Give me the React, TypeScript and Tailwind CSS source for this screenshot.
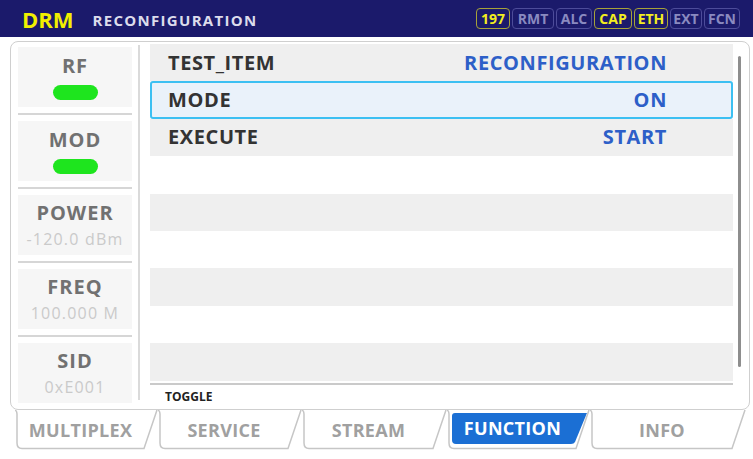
import React from 'react';

const indicators = [
  { label: '197', on: true, w: 'w-[34px]' },
  { label: 'RMT', on: false, w: 'w-[42px]' },
  { label: 'ALC', on: false, w: 'w-[36px]' },
  { label: 'CAP', on: true, w: 'w-[38px]' },
  { label: 'ETH', on: true, w: 'w-[34px]' },
  { label: 'EXT', on: false, w: 'w-[32px]' },
  { label: 'FCN', on: false, w: 'w-[36px]' },
];

const statusCells = [
  { label: 'RF', led: true },
  { label: 'MOD', led: true },
  { label: 'POWER', value: '-120.0 dBm' },
  { label: 'FREQ', value: '100.000 M' },
  { label: 'SID', value: '0xE001' },
];

const rows = [
  { name: 'TEST_ITEM', value: 'RECONFIGURATION' },
  { name: 'MODE', value: 'ON' },
  { name: 'EXECUTE', value: 'START' },
  {}, {}, {}, {}, {}, {},
];

const tabs = [
  { label: 'MULTIPLEX', w: 143 },
  { label: 'SERVICE', w: 144 },
  { label: 'STREAM', w: 145 },
  { label: 'FUNCTION', w: 143, active: true },
  { label: 'INFO', w: 156 },
];

const TAB_H = 40;

const Tab: React.FC<{ label: string; w: number; active?: boolean }> = ({ label, w, active }) => {
  const h = TAB_H;
  return (
    <div className="relative shrink-0 h-[40px]" style={{ width: w }}>
      <svg className="absolute inset-0" width={w} height={h} viewBox={`0 0 ${w} ${h}`}>
        {active && (
          <path
            d={`M5,6 Q5,3 8,3 L${w - 3},3 L${w - 15},${h - 8} Q${w - 16},${h - 6} ${w - 19},${h - 6} L9,${h - 6} Q5,${h - 6} 5,${h - 10} Z`}
            fill="#1b6fd4"
          />
        )}
        <path
          d={`M0,0 Q2,1 2,4 L2,${h - 7} Q2,${h - 1.5} 7,${h - 1.5} L${w - 14},${h - 1.5} L${w - 1},0`}
          fill="none"
          stroke="#c6c6c6"
          strokeWidth="1.5"
        />
      </svg>
      <div
        className={`relative flex h-full items-center justify-center pr-[12px] text-[18px] font-bold tracking-[0.3px] ${
          active ? 'text-white pb-[4px]' : 'text-[#a0a0a0]'
        }`}
      >
        {label}
      </div>
    </div>
  );
};

export default function App() {
  return (
    <div className="w-[753px] h-[459px] overflow-hidden bg-white font-['Open_Sans',sans-serif]">
      {/* Header */}
      <div className="flex h-[37px] items-center bg-[#1b1a6b] pl-[22px] pr-[13px]">
        <span className="text-[22px] font-bold leading-none text-[#f2f000]">DRM</span>
        <span className="ml-[19px] mt-[3px] text-[15px] font-bold leading-none tracking-[1.3px] text-[#dcdcec]">
          RECONFIGURATION
        </span>
        <div className="ml-auto flex gap-[2px]">
          {indicators.map(ind => (
            <div
              key={ind.label}
              className={`flex h-[21px] items-center justify-center rounded-[4px] border text-[14px] font-bold leading-none ${ind.w} ${
                ind.on
                  ? 'border-[#a6a23a] text-[#f2ee20]'
                  : 'border-[#4d4c9a] text-[#8a8ac0]'
              }`}
            >
              {ind.label}
            </div>
          ))}
        </div>
      </div>

      {/* Main panel */}
      <div className="ml-[10px] mt-[4px] flex h-[369px] w-[740px] rounded-[8px] border border-[#cfcfcf]">
        {/* Status column */}
        <div className="ml-[7px] mt-[5px] flex w-[114px] flex-col">
          {statusCells.map((c, i) => (
            <React.Fragment key={c.label}>
              {i > 0 && <div className="my-[6px] h-[2px] bg-[#d6d6d6]" />}
              <div className="flex h-[60px] flex-col items-center justify-center gap-[6px] bg-[#f6f6f6]">
                <span className="text-[20px] font-bold leading-[22px] tracking-[1px] text-[#717171]">{c.label}</span>
                {c.led ? (
                  <span className="mt-[2px] h-[15px] w-[45px] rounded-full bg-[#1ee51e]" />
                ) : (
                  <span className="text-[16px] leading-[18px] tracking-[1.2px] text-[#cacaca]">{c.value}</span>
                )}
              </div>
            </React.Fragment>
          ))}
        </div>

        {/* Divider */}
        <div className="ml-[6px] mt-[3px] h-[355px] w-[2px] bg-[#dadada]" />

        {/* Item list */}
        <div className="ml-[10px] mt-[2px] flex w-[583px] flex-col">
          {rows.map((r, i) => {
            const selected = i === 1;
            return (
              <div
                key={i}
                className={`flex h-[37.4px] items-center justify-between text-[20px] font-bold tracking-[0.6px] ${
                  selected
                    ? 'rounded-[3px] border-2 border-[#3cc0f2] bg-[#eaf2fa] pl-[16px] pr-[64px]'
                    : i % 2 === 0
                    ? 'bg-[#efefef] pl-[18px] pr-[66px]'
                    : 'bg-white pl-[18px] pr-[66px]'
                }`}
              >
                <span className="text-[#333333]">{r.name}</span>
                <span className="text-[#2d5fc8]">{r.value}</span>
              </div>
            );
          })}
          <div className="mt-[2px] h-[2px] bg-[#cacaca]" />
          <div className="pl-[15px] pt-[4px] text-[12px] font-bold leading-[16px] text-[#222222]">TOGGLE</div>
        </div>

        {/* Scrollbar */}
        <div className="ml-[5px] mt-[14px] h-[311px] w-[3px] rounded-full bg-[#8e8e8e]" />
      </div>

      {/* Tabs */}
      <div className="ml-[15px] flex">
        {tabs.map(t => (
          <Tab key={t.label} {...t} />
        ))}
      </div>
    </div>
  );
}
